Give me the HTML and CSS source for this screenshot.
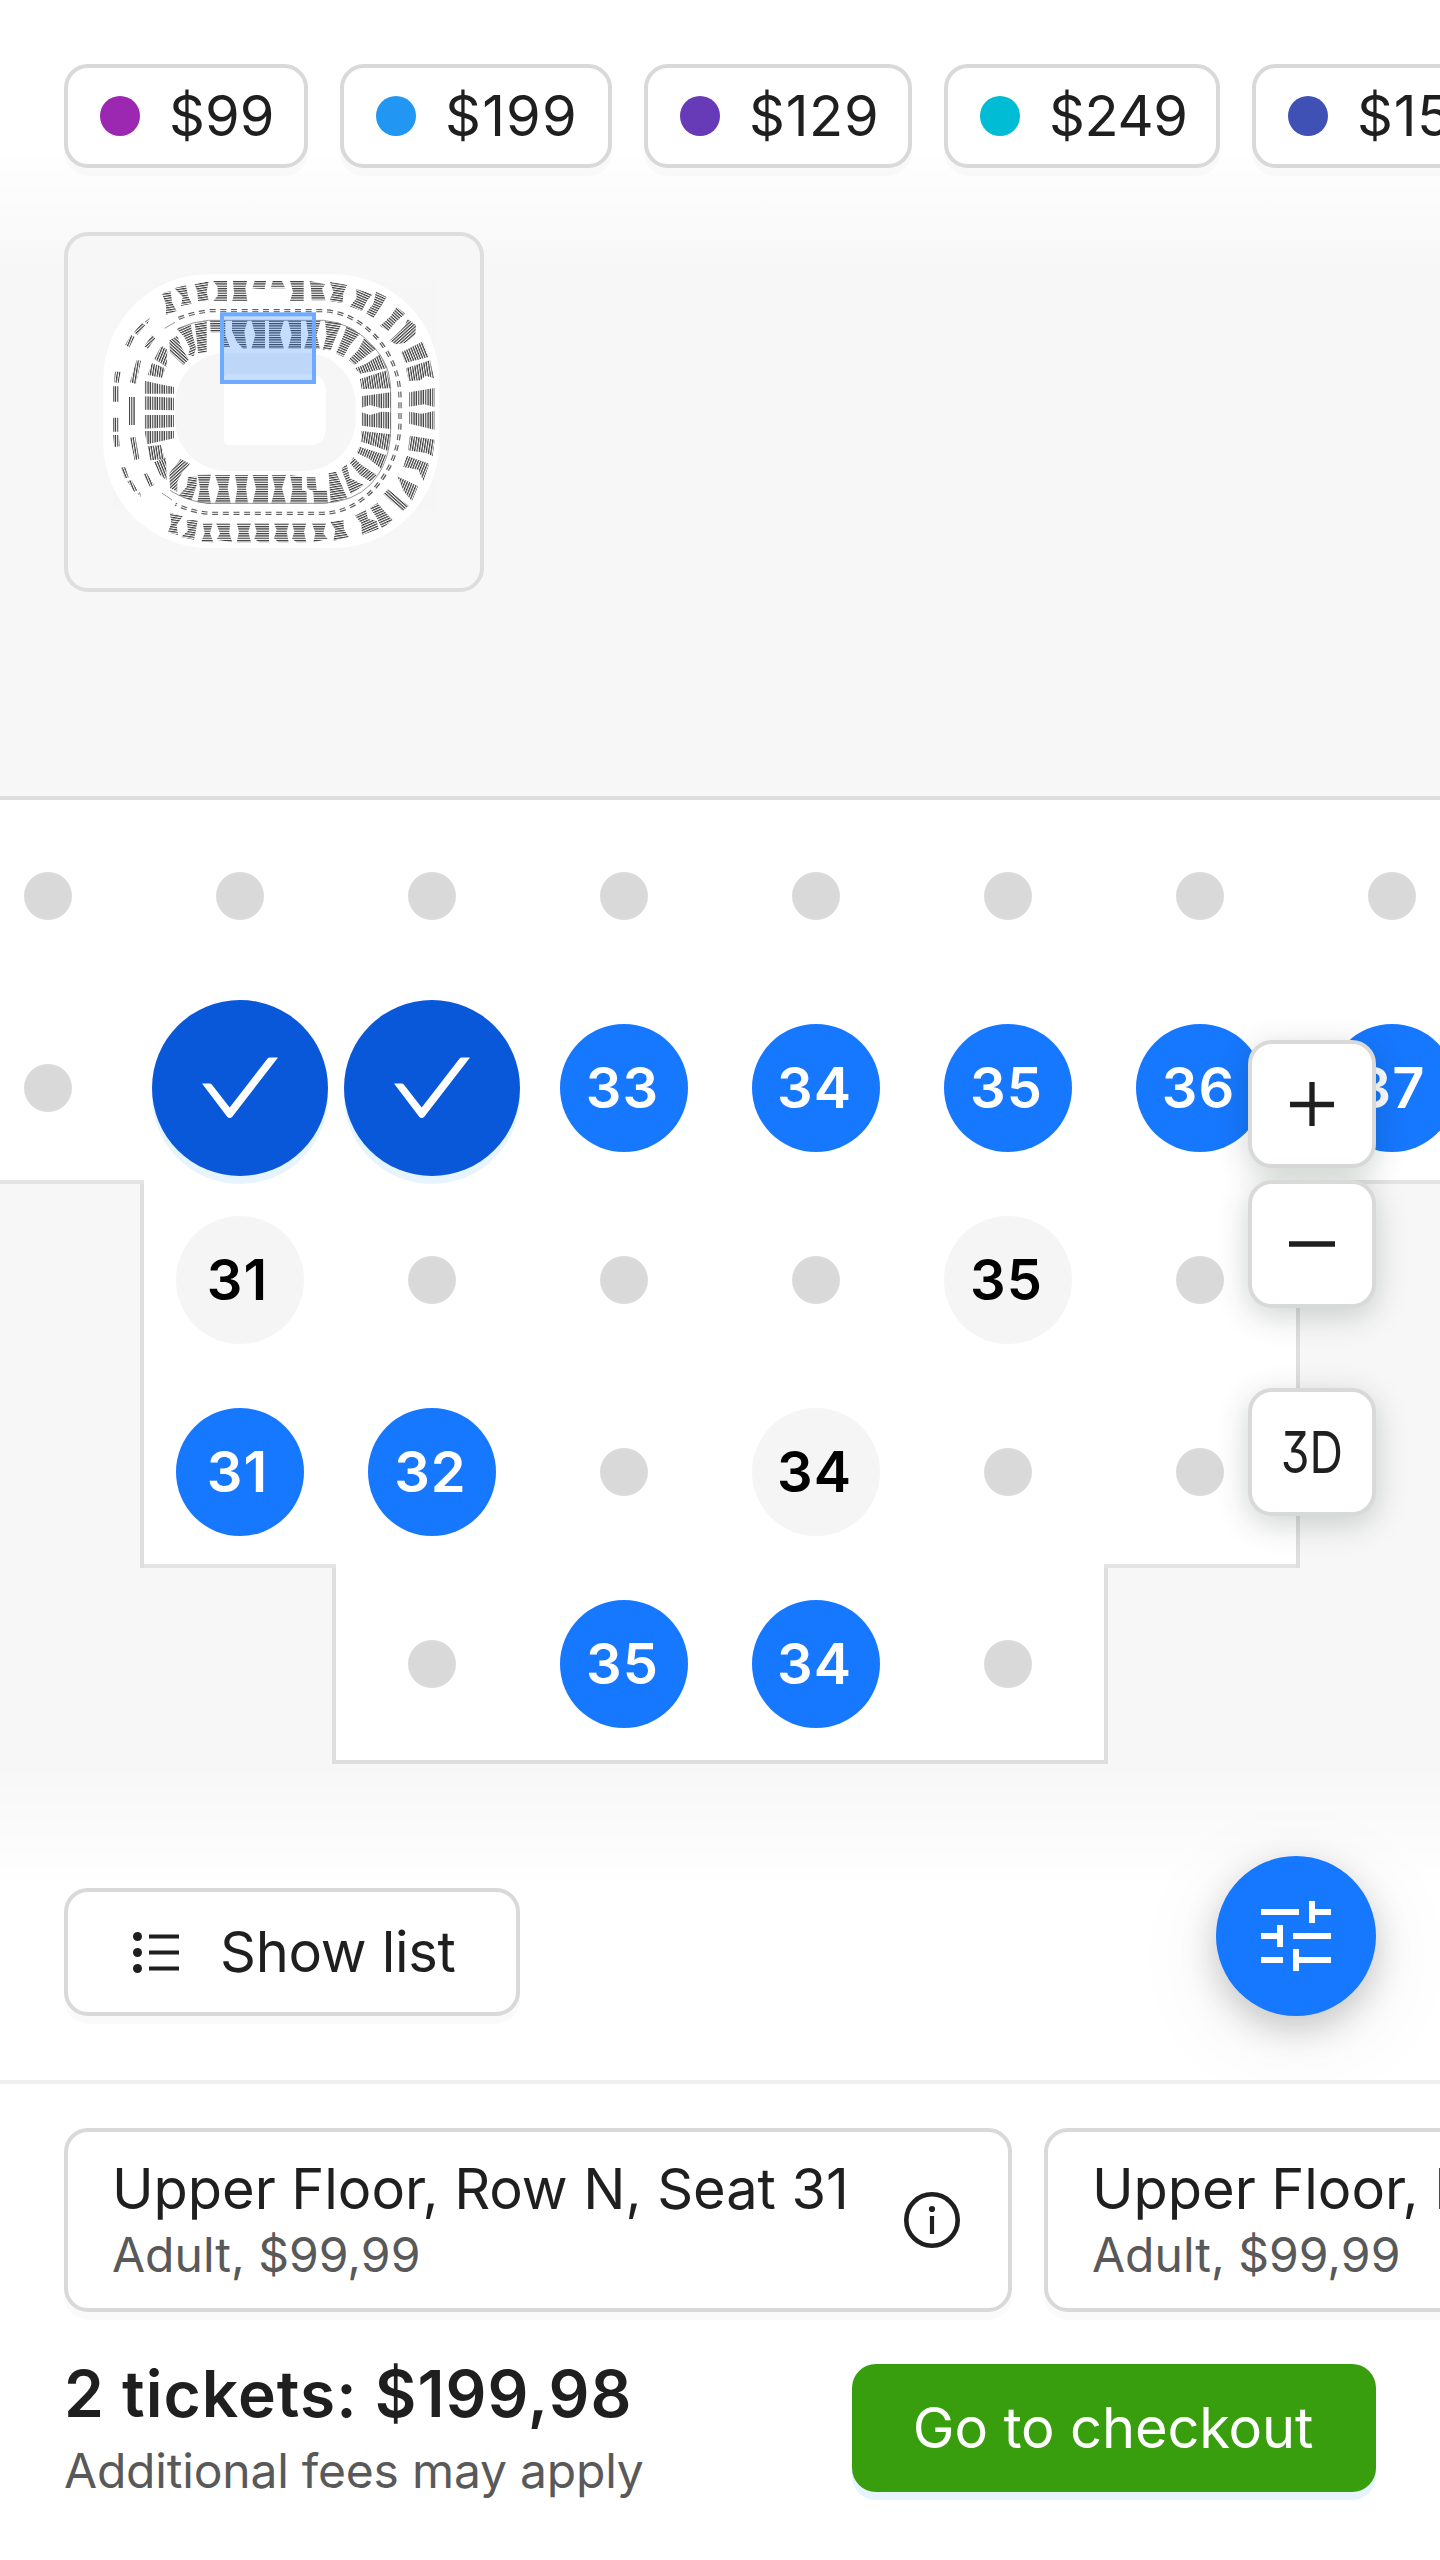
FILE: index.html
```html
<!DOCTYPE html>
<html lang="en">
<head>
<meta charset="utf-8">
<title>Seat selection</title>
<link rel="stylesheet" href="styles.css">
</head>
<body>
<div class="screen">
  <section class="venue">
    <div class="map">
      <svg class="map-shape" viewBox="0 0 1440 2080" aria-hidden="true">
        <path fill="#fff" d="M0 798H1440V1182H1298V1566H1106V1762H334V1566H142V1182H0Z"/>
        <path fill="none" stroke="#dedede" stroke-width="4" d="M0 798H1440M1440 1182H1298V1566H1106V1762H334V1566H142V1182H0"/>
        <path stroke="#e4e4e4" stroke-width="4" d="M0 1182H144M144 1566H336M1104 1566H1296M1300 1182H1440"/>
      </svg>
      <div class="seats">
        <i class="dot"></i><i class="dot"></i><i class="dot"></i><i class="dot"></i><i class="dot"></i><i class="dot"></i><i class="dot"></i><i class="dot"></i>

        <i class="dot"></i>
        <button class="seat chosen"><svg viewBox="0 0 176 176"><path d="M50 83.500H57.500Q59 83.500 60 84.700L77.700 107.500L115.400 58.700Q116.300 57.500 118 57.500H126L80.500 116.500Q77.700 119.500 75 116.500Z"/></svg></button>
        <button class="seat chosen"><svg viewBox="0 0 176 176"><path d="M50 83.500H57.500Q59 83.500 60 84.700L77.700 107.500L115.400 58.700Q116.300 57.500 118 57.500H126L80.500 116.500Q77.700 119.500 75 116.500Z"/></svg></button>
        <button class="seat">33</button><button class="seat">34</button><button class="seat">35</button><button class="seat">36</button><button class="seat">37</button>

        <b></b><button class="seat plain narrow">31</button><i class="dot"></i><i class="dot"></i><i class="dot"></i><button class="seat plain">35</button><i class="dot"></i><b></b>

        <b></b><button class="seat narrow">31</button><button class="seat">32</button><i class="dot"></i><button class="seat plain">34</button><i class="dot"></i><i class="dot"></i><b></b>

        <b></b><b></b><i class="dot"></i><button class="seat">35</button><button class="seat">34</button><i class="dot"></i><b></b><b></b>
      </div>
    </div>
    <div class="fade fade-top"></div>
    <div class="fade fade-bottom"></div>

    <div class="overlay">
      <nav class="prices">
        <button class="chip w244"><i class="c-purple"></i><span>$99</span></button>
        <button class="chip w272"><i class="c-blue"></i><span class="ls-wide">$199</span></button>
        <button class="chip w268"><i class="c-violet"></i><span class="ls-mid">$129</span></button>
        <button class="chip w276"><i class="c-cyan"></i><span class="ls-tight">$249</span></button>
        <button class="chip w272"><i class="c-indigo"></i><span class="ls-mid">$159</span></button>
      </nav>

      <div class="minimap">
        <svg viewBox="24 33 1236 1056" aria-hidden="true">
          <defs>
            <pattern id="p0" width="7" height="7" patternUnits="userSpaceOnUse"><rect width="7" height="3.600"/></pattern>
            <pattern id="p10" href="#p0" patternTransform="rotate(9)"/>
            <pattern id="p25" href="#p0" patternTransform="rotate(24)"/>
            <pattern id="p45" href="#p0" patternTransform="rotate(42)"/>
            <pattern id="p70" href="#p0" patternTransform="rotate(68)"/>
            <pattern id="p80" href="#p0" patternTransform="rotate(81)"/>
            <pattern id="p90" href="#p0" patternTransform="rotate(90)"/>
            <pattern id="n10" href="#p0" patternTransform="rotate(-9)"/>
            <pattern id="n25" href="#p0" patternTransform="rotate(-24)"/>
            <pattern id="n45" href="#p0" patternTransform="rotate(-42)"/>
            <pattern id="n70" href="#p0" patternTransform="rotate(-68)"/>
            <pattern id="n80" href="#p0" patternTransform="rotate(-81)"/>
          </defs>
          <rect x="130" y="148" width="1007" height="821" rx="315" fill="#fff"/>
          <rect x="345" y="383" width="542" height="355" rx="155" fill="#f7f7f7"/>
          <path fill="#fff" d="M507 447H742Q798 447 798 503V605Q798 661 742 661H507Q492 661 492 646V462Q492 447 507 447Z"/>
          <g class="stands">
            <g fill="url(#p0)">
              <path d="M460 168H501V228H460L473 212V186ZM519 168H561L556 190L562 228H517L522 205ZM584 168H618L614 192L577 190ZM638 168H666L676 190H632ZM690 168H731V228H690L699 200ZM749 168L796 178L786 192L797 226H755L753 190Z"/>
              <path d="M450 286H496V330L510 366H480L484 322H452ZM516 286H563L553 320L561 372H550L530 350L516 318ZM574 286H615V371H574L586 330ZM627 286H672L660 328L672 371H627ZM684 286H723V371H684L695 330ZM738 286H782L770 330L780 372H732L745 330Z"/>
              <path d="M740 757H766L770 796H800L804 835H762L760 800L742 790ZM690 750L726 755L726 795L740 800V835H690L698 790ZM636 750H678L666 790L678 835H634L645 790ZM578 750H624V835H578L588 790ZM525 750H564L558 790L564 835H525L532 790ZM465 750H510L503 790L512 835H465L478 790ZM413 750L453 748L444 790L453 836L412 832L420 790Z"/>
              <path d="M428 895H458L450 925L460 952L424 950L434 925ZM468 894H510L508 925L517 952L470 944L480 925ZM530 894H573L565 920L573 952H530L537 920ZM583 894H627V952H598L583 942L590 920ZM642 894H687L680 920L686 952H655L642 940L650 915ZM696 894H739L732 920L739 952H710L696 942L703 920ZM756 894H798L790 925L803 942L760 952L766 925Z"/>
            </g>
            <g fill="url(#n10)">
              <path d="M306 205L332 198L336 232L350 258L318 269L318 240ZM343 190L378 181L384 212L395 236L363 243L368 215ZM404 178L446 169L440 200L446 228L414 229L412 200ZM404 296L440 287V382L414 385L410 340ZM806 745L828 740L862 820L812 833ZM811 890L850 885L852 912L866 936L820 948L826 915Z"/>
            </g>
            <g fill="url(#p10)">
              <path d="M810 171L862 180L850 204L848 234L808 228L820 200ZM795 288L845 295L830 330L812 376L788 374L800 330ZM330 863L368 874L350 900L354 930L324 922L334 893ZM380 885L413 886L408 915L402 944L363 936L384 918ZM385 755H410V780L395 826L356 812L380 785Z"/>
            </g>
            <g fill="url(#p25)">
              <path d="M888 192L938 208L922 226L906 258L869 244L890 220ZM948 200L980 216L966 240L940 279L918 264L940 236ZM860 304L900 326L870 360L850 396L828 384L845 345Z"/>
            </g>
            <g fill="url(#n25)">
              <path d="M350 312L392 298L398 330L408 370L401 394L385 390L390 368L372 335ZM860 718L870 760L912 780L872 808L860 775L844 732ZM930 848L953 834L970 855L998 886L966 910L950 878ZM885 872L918 855L924 882L950 888L956 912L906 930L904 896Z"/>
            </g>
            <g fill="url(#p45)">
              <path d="M1010 246L1036 266L1008 290L985 318L960 302L992 274ZM912 340L948 372L910 400L884 420L866 404L895 375ZM328 346L352 332L362 362L386 404L370 420L330 382ZM984 793L1046 842L1028 858L970 808Z"/>
            </g>
            <g fill="url(#n45)">
              <path d="M1042 282L1068 300L1066 330L1034 354L1005 358L990 346L1020 318L1035 302ZM880 697L905 720L950 750L932 770L900 750L870 715ZM362 702L390 716L368 740L352 770V800L330 790L328 745ZM253 364L276 331L286 340L264 371ZM222 322L246 294L256 300L232 330ZM255 290L270 278L262 298Z"/>
            </g>
            <g fill="url(#n70)">
              <path d="M283 402L304 362L322 374L320 426ZM1040 692L1108 716L1090 768L1075 734L1030 726ZM1012 754L1074 784L1056 828L1032 800ZM898 665L978 690L964 732L925 700L890 684ZM196 360L212 330L224 336L208 367Z"/>
            </g>
            <g fill="url(#p70)">
              <path d="M282 712L318 698L320 766L300 750ZM960 388L980 430L900 446L886 430L920 415ZM1023 382L1088 350L1106 396L1036 414ZM182 728L196 726L206 758L194 760ZM202 768L214 765L232 796L222 800ZM232 804L240 802L243 818ZM250 748L260 744L282 780L270 786Z"/>
            </g>
            <g fill="url(#p80)">
              <path d="M980 436L992 490L905 492L900 462ZM1038 430L1110 406L1122 460L1098 452L1082 466L1046 468ZM263 664L304 660L314 702L270 706ZM210 638L226 636L238 702L224 706Z"/>
            </g>
            <g fill="url(#n80)">
              <path d="M1050 632L1124 644L1118 694L1098 684L1044 676ZM904 618L992 628L984 678L945 664L904 650ZM263 450L276 414L316 430L306 458ZM230 405L243 407L228 476L210 472ZM165 440H182L176 474L162 472Z"/>
            </g>
            <g fill="url(#p90)">
              <path d="M1048 502L1124 489V546L1092 538L1048 545ZM1048 560L1085 566L1124 558V614L1048 596ZM904 514L992 502V548L965 550L930 540L904 548ZM904 562L930 570L965 560L992 562V612L904 602ZM253 467L300 478L342 486V506H253ZM253 514L342 518V556L253 554ZM253 570H342V606L253 611ZM253 618H342V640L262 658ZM159 484H177V530H159ZM159 578H176V620H159ZM159 630H176L180 664L163 666ZM207 516H225V600H207Z"/>
            </g>
            <path class="ring" d="M356 280Q400 262 450 257H790C910 262 1020 380 1020 520V590C1020 740 910 862 790 865H450Q400 862 346 838"/>
            <path class="ring-gap" d="M356 280Q400 262 450 257H790C910 262 1020 380 1020 520V590C1020 740 910 862 790 865H450Q400 862 346 838"/>
            <path class="rail" d="M355 310Q400 289 445 286H790Q880 292 945 370C985 420 992 450 992 520V612C990 680 975 730 930 780Q880 830 790 835H440Q380 828 330 796M314 310L345 292M306 804L336 825"/>
          </g>
          <rect x="486" y="268" width="276" height="203" fill="#1677ff" fill-opacity=".25" stroke="#6eaaff" stroke-width="12"/>
        </svg>
      </div>

      <div class="zoom-controls">
        <button class="tool"><svg viewBox="0 0 48 48"><path d="M2 24.500H46M24 2V46"/></svg></button>
        <button class="tool"><svg viewBox="0 0 48 48"><path d="M1 24H47"/></svg></button>
        <button class="tool tool-3d"><span>3D</span></button>
      </div>

      <div class="actions">
        <button class="show-list">
          <svg viewBox="0 0 48 48"><path d="M17 8.500H47M17 24.500H47M17 40.500H47" stroke="#1f1f1f" stroke-width="4"/><g fill="#1f1f1f"><circle cx="5.500" cy="8.500" r="4.500"/><circle cx="5.500" cy="24.500" r="4.500"/><circle cx="5.500" cy="40.500" r="4.500"/></g></svg>
          <span>Show list</span>
        </button>
        <button class="filter">
          <svg viewBox="0 0 70 70"><path fill="#fff" d="M0 8H38V14H0ZM48 0H54V8H70V14H54V22H48ZM0 32H16V24H22V46H16V38H0ZM32 32H70V38H32ZM0 56H22V62H0ZM32 48H38V56H70V62H38V70H32Z"/></svg>
        </button>
      </div>
    </div>
  </section>

  <footer class="cart">
    <div class="tickets">
      <article class="ticket">
        <div><h3>Upper Floor, Row N, Seat 31</h3><p>Adult, $99,99</p></div>
        <svg viewBox="0 0 56 56"><circle cx="28" cy="28" r="25.700" fill="none" stroke="#1f1f1f" stroke-width="4.600"/><circle cx="28" cy="17" r="3.100" fill="#1f1f1f"/><path d="M28 24V42" stroke="#1f1f1f" stroke-width="4.200"/></svg>
      </article>
      <article class="ticket">
        <div><h3>Upper Floor, Row N, Seat 32</h3><p>Adult, $99,99</p></div>
        <svg viewBox="0 0 56 56"><circle cx="28" cy="28" r="25.700" fill="none" stroke="#1f1f1f" stroke-width="4.600"/></svg>
      </article>
    </div>
    <div class="summary">
      <div><h2>2 tickets: $199,98</h2><p>Additional fees may apply</p></div>
      <button class="checkout">Go to checkout</button>
    </div>
  </footer>
</div>
</body>
</html>
```

FILE: styles.css
```css
* { box-sizing: border-box; margin: 0; padding: 0; }

body {
  width: 1440px;
  height: 2560px;
  overflow: hidden;
  background: #fff;
  color: #1f1f1f;
  font-family: Inter, "Liberation Sans", sans-serif;
  font-size: 56px;
}

button { font: inherit; color: inherit; border: 0; background: none; flex: none; }
svg { display: block; }

.screen { display: flex; flex-direction: column; width: 1440px; height: 2560px; overflow: hidden; }

/* Venue map */
.venue { position: relative; height: 2080px; background: #f7f7f7; overflow: hidden; }
.map { position: absolute; inset: 0; }
.map-shape { position: absolute; inset: 0; width: 1440px; height: 2080px; }

.seats {
  position: relative;
  display: grid;
  grid-template-columns: repeat(8, 192px);
  grid-auto-rows: 192px;
  place-items: center;
  margin: 800px 0 0 -48px;
}

.dot { width: 48px; height: 48px; border-radius: 50%; background: #d9d9d9; }

.seat {
  width: 128px;
  height: 128px;
  border-radius: 50%;
  background: #1677ff;
  color: #fff;
  font-weight: 560;
  line-height: 128px;
  letter-spacing: 1px;
  padding-right: 3px;
  text-align: center;
}
.seat.narrow { padding-right: 5px; }
.seat.plain { background: #f5f5f5; color: #000; }
.seat.chosen { width: 176px; height: 176px; padding: 0; background: #0958d9; box-shadow: 0 8px 0 #e6f4ff; }
.chosen svg { width: 176px; height: 176px; fill: #fff; }

.fade { position: absolute; left: 0; right: 0; }
.fade-top { top: 0; height: 272px; background: linear-gradient(#fff 55%, rgba(255, 255, 255, 0)); }
.fade-bottom { top: 1764px; bottom: 0; background: linear-gradient(rgba(255, 255, 255, 0), #fff 124px); }

.overlay { position: relative; display: flex; flex-direction: column; height: 2080px; }

/* Price filter */
.prices { display: flex; gap: 32px; padding: 64px 0 0 64px; }
.chip {
  display: flex;
  align-items: center;
  height: 104px;
  padding-left: 32px;
  gap: 29px;
  border: 4px solid #d9d9d9;
  border-radius: 24px;
  background: #fff;
  box-shadow: 0 8px 0 rgba(0, 0, 0, .02);
}
.chip i { width: 40px; height: 40px; border-radius: 50%; }
.w244 { width: 244px; }
.w268 { width: 268px; }
.w272 { width: 272px; }
.w276 { width: 276px; }
.ls-wide { letter-spacing: 1.2px; }
.ls-mid { letter-spacing: .7px; }
.ls-tight { letter-spacing: -.4px; }
.c-purple { background: #9c27b0; }
.c-blue { background: #2196f3; }
.c-violet { background: #673ab7; }
.c-cyan { background: #00bcd4; }
.c-indigo { background: #3f51b5; }

/* Stadium overview */
.minimap {
  width: 420px;
  height: 360px;
  margin: 64px 0 0 64px;
  border: 4px solid #dedede;
  border-radius: 24px;
  background: #f7f7f7;
  overflow: hidden;
}
.minimap svg { width: 412px; height: 352px; }
.stands { opacity: .78; }
.ring, .ring-gap, .rail { fill: none; }
.ring { stroke: #333; stroke-width: 10; stroke-dasharray: 18 14; }
.ring-gap { stroke: #fff; stroke-width: 3; }
.rail { stroke: #333; stroke-width: 2; }

/* Map tools */
.zoom-controls { display: flex; flex-direction: column; align-self: flex-end; gap: 12px; margin: 448px 64px 0 0; }
.tool {
  display: flex;
  align-items: center;
  justify-content: center;
  width: 128px;
  height: 128px;
  border: 4px solid #d9d9d9;
  border-radius: 24px;
  background: #fff;
  box-shadow: 0 8px 32px rgba(10, 40, 20, .2);
}
.tool svg { width: 48px; height: 48px; stroke: #1f1f1f; stroke-width: 5.300; }
.tool-3d { margin-top: 68px; }
.tool-3d span { font-size: 58px; line-height: 1; font-feature-settings: "cv09"; transform: scaleX(.8); }

/* Bottom actions */
.actions { display: flex; justify-content: space-between; align-items: flex-end; padding: 0 64px; margin-top: 340px; }
.show-list {
  display: flex;
  align-items: center;
  gap: 40px;
  width: 456px;
  height: 128px;
  padding-left: 64px;
  border: 4px solid #d9d9d9;
  border-radius: 24px;
  background: #fff;
  letter-spacing: -.3px;
  box-shadow: 0 8px 0 rgba(0, 0, 0, .02);
}
.show-list svg { width: 48px; height: 48px; }
.filter {
  display: flex;
  align-items: center;
  justify-content: center;
  width: 160px;
  height: 160px;
  border-radius: 50%;
  background: #1677ff;
  box-shadow: 0 12px 36px rgba(0, 0, 0, .2), 0 20px 100px rgba(0, 0, 0, .07);
}
.filter svg { width: 70px; height: 70px; }

/* Cart */
.cart { height: 480px; border-top: 4px solid #f0f0f0; padding: 44px 0 0 64px; background: #fff; }
.tickets { display: flex; gap: 32px; }
.ticket {
  display: flex;
  flex: none;
  align-items: center;
  justify-content: space-between;
  width: 948px;
  height: 184px;
  padding: 0 48px 0 44px;
  border: 4px solid #d9d9d9;
  border-radius: 24px;
  box-shadow: 0 8px 0 rgba(0, 0, 0, .02);
}
.ticket div { height: 134px; }
.ticket svg { width: 56px; height: 56px; }
.ticket h3 { font-size: 56px; font-weight: 400; line-height: 72px; letter-spacing: -.06px; white-space: nowrap; }
.ticket p { font-size: 48px; line-height: 60px; color: #595959; }

.summary { display: flex; justify-content: space-between; align-items: flex-start; margin: 42px 64px 0 0; }
.summary h2 { font-size: 64px; font-weight: 600; line-height: 80px; letter-spacing: 1.05px; }
.summary p { font-size: 48px; line-height: 72px; letter-spacing: -.2px; color: #595959; margin-top: 1px; }
.checkout {
  width: 524px;
  height: 128px;
  margin-top: 10px;
  padding-right: 2px;
  border-radius: 24px;
  background: #389e0d;
  color: #fff;
  letter-spacing: -.15px;
  box-shadow: 0 8px 0 #e6f4ff;
}
```
